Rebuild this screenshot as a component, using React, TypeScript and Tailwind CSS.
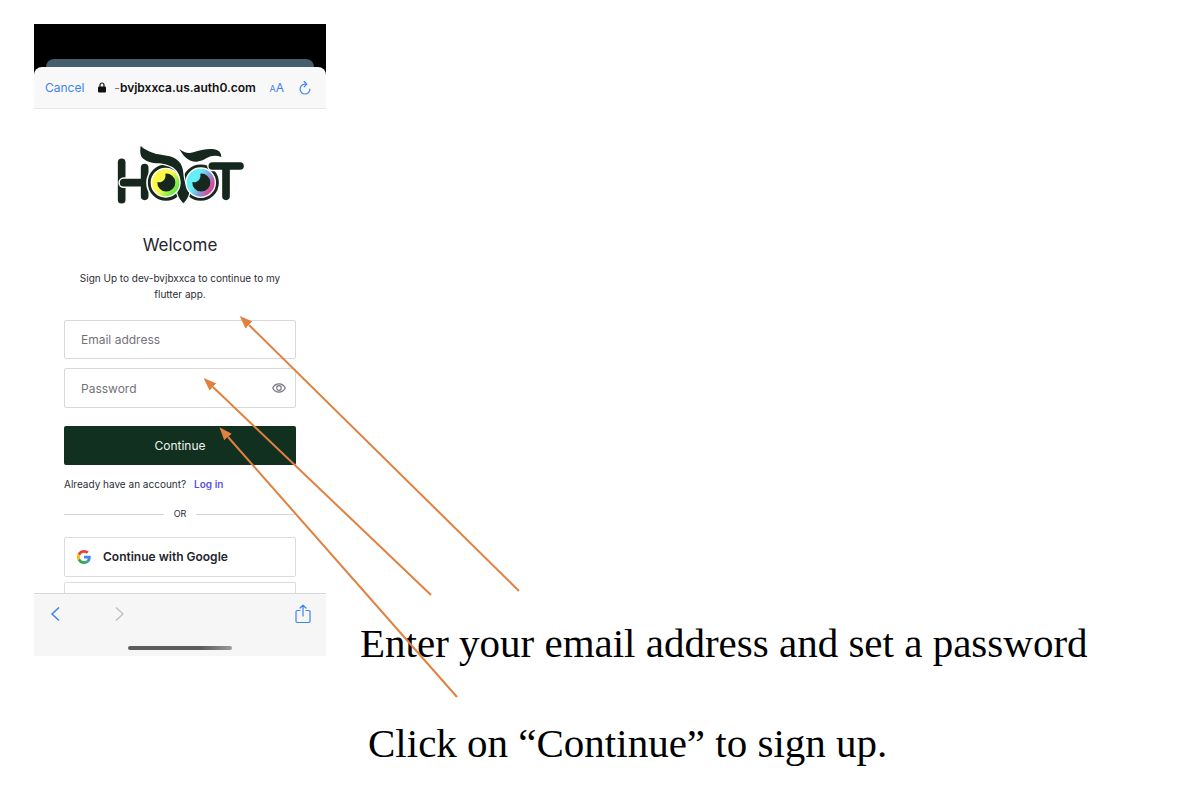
import { useId } from "react";

function HootLogo() {
  const id = useId();
  const dark = "#16271d";
  return (
    <svg viewBox="0 0 420 225" className="h-[75px] w-[140px]" role="img" aria-label="Hoot">
      <defs>
        <linearGradient id={`${id}y`} x1="0" y1="0.2" x2="1" y2="0.9">
          <stop offset="0.45" stopColor="#fdf94a" />
          <stop offset="0.85" stopColor="#5fe845" />
        </linearGradient>
        <linearGradient id={`${id}b`} x1="0" y1="0.2" x2="1" y2="0.75">
          <stop offset="0.35" stopColor="#66eef7" />
          <stop offset="0.6" stopColor="#7fa4e0" />
          <stop offset="0.85" stopColor="#d9489c" />
        </linearGradient>
      </defs>
      <g stroke={dark} strokeWidth="23" strokeLinecap="round">
        <path d="M35 73V185" />
        <path d="M41 134H104" stroke="#fff" strokeWidth="32" />
        <path d="M104 89V175M41 134H104" />
      </g>
      <circle cx="168" cy="134" r="57" fill={dark} stroke="#fff" strokeWidth="5" />
      <circle cx="272" cy="134" r="57" fill={dark} stroke="#fff" strokeWidth="5" />
      <g strokeLinecap="round">
        <path d="M307 84H390M348 84V175" stroke="#fff" strokeWidth="31" />
        <path d="M307 84H390M348 84V175" stroke={dark} strokeWidth="23" />
      </g>
      <path
        d="M92 23C89 44 91 56 102 64C120 78 142 75 162 78C186 83 202 94 208 113C213 131 202 151 202 166C205 178 213 189 220 196C228 188 235 178 238 164C228 146 222 130 220 106C219 76 202 58 171 53C146 49 130 47 114 38C104 32 98 30 92 23Z"
        fill={dark}
        stroke="#fff"
        strokeWidth="7"
        paintOrder="stroke"
      />
      <path
        d="M208 33C222 44 234 47 250 43C268 37 288 32 306 33C325 34 334 43 334 57C324 53 312 52 302 55C288 60 278 70 260 71C236 72 220 55 208 33Z"
        fill={dark}
      />
      <circle cx="167" cy="134" r="43" fill={`url(#${id}y)`} stroke="#fff" strokeWidth="4" />
      <circle cx="272" cy="134" r="44" fill={`url(#${id}b)`} stroke="#fff" strokeWidth="4" />
      <path d="M166 107A27 27 0 1 1 142 132C158 136 169 122 166 107Z" fill={dark} />
      <path d="M271 107A27 27 0 1 1 247 132C263 136 274 122 271 107Z" fill={dark} />
    </svg>
  );
}

function GoogleMark() {
  return (
    <svg viewBox="0 0 48 48" className="size-[14px]" aria-hidden="true">
      <path fill="#ea4335" d="M24 9.500c3.500 0 6.700 1.200 9.200 3.600l6.900-6.900C35.900 2.400 30.500 0 24 0 14.600 0 6.500 5.400 2.600 13.200l8 6.200C12.400 13.700 17.700 9.500 24 9.500z" />
      <path fill="#4285f4" d="M47 24.500c0-1.600-.2-3.100-.4-4.500H24v9h12.900c-.6 3-2.200 5.500-4.700 7.200l7.700 6C44.400 38 47 31.800 47 24.500z" />
      <path fill="#fbbc05" d="M10.500 28.600A14.500 14.500 0 0 1 10.500 19.400l-7.900-6.200A24 24 0 0 0 2.600 34.800z" />
      <path fill="#34a853" d="M24 48c6.500 0 11.900-2.100 15.900-5.800l-7.700-6c-2.100 1.500-4.900 2.300-8.200 2.300-6.300 0-11.600-4.200-13.500-9.900l-7.900 6.200C6.500 42.600 14.600 48 24 48z" />
    </svg>
  );
}

function BrowserBar() {
  return (
    <header className="bg-black pt-[35px]">
      <div className="mx-3 h-2 rounded-t-lg bg-[#465d6e]" />
      <div className="flex h-[42px] items-center rounded-t-lg border-b border-[#e6e6e6] bg-[#f8f8f8] pr-[14px] pl-[11px] text-[#3c82f0]">
        <button type="button" className="text-[12px]">Cancel</button>
        <svg viewBox="0 0 8 11" className="ml-[14px] h-[11px] w-2" aria-hidden="true">
          <rect y="4.500" width="8" height="6" rx="1" fill="#111" />
          <path d="M2 5V3a2 2 0 0 1 4 0v2" fill="none" stroke="#111" strokeWidth="1.200" />
        </svg>
        <span className="ml-2 text-[12px] font-semibold whitespace-nowrap text-[#111]">
          <span className="font-normal text-[#777]">-</span>bvjbxxca.us.auth0.com
        </span>
        <button type="button" aria-label="Text size" className="ml-auto flex items-baseline">
          <span className="text-[9px]">A</span>
          <span className="text-[12px]">A</span>
        </button>
        <button type="button" aria-label="Reload" className="ml-[14px]">
          <svg viewBox="0 0 14 16" className="h-4 w-[14px]" fill="none" stroke="currentColor" strokeWidth="1.200" strokeLinecap="round" strokeLinejoin="round">
            <path d="M7 4.200A4.900 4.900 0 1 0 11.900 9.100M6.200 1.500L8.800 4.200L6.200 6.800" />
          </svg>
        </button>
      </div>
    </header>
  );
}

function SignUpForm() {
  const field =
    "block w-full rounded-xs border border-[#d9d9dc] bg-white px-4 text-[12px] text-[#333] placeholder:text-[#727279] placeholder:opacity-100";
  return (
    <form className="px-[30px]" onSubmit={(e) => e.preventDefault()}>
      <input type="email" aria-label="Email address" placeholder="Email address" className={`${field} h-[39px]`} />
      <div className="relative mt-[9px]">
        <input type="password" aria-label="Password" placeholder="Password" className={`${field} h-10`} />
        <button type="button" aria-label="Show password" className="absolute inset-y-0 right-[10px] text-[#77777e]">
          <svg viewBox="0 0 14 10" className="h-[10px] w-[14px]" fill="none" stroke="currentColor" strokeWidth="1.200">
            <path d="M.7 5C3.500-.5 10.500-.5 13.300 5C10.500 10.500 3.500 10.500.7 5Z" />
            <circle cx="7" cy="5" r="2.300" />
          </svg>
        </button>
      </div>
      <button type="submit" className="mt-[18px] h-[39px] w-full rounded-xs bg-[#12301f] text-[12px] text-[#eef2ef]">
        Continue
      </button>
      <p className="mt-[11px] text-[10px] leading-4 text-[#2d2e38]">
        Already have an account?
        <a href="#login" className="ml-2 font-semibold text-[#5a50e6]">Log in</a>
      </p>
      <div className="mt-[14px] flex items-center gap-[10px] text-[9px] leading-4 text-[#2d2e38]">
        <span className="h-px flex-1 bg-[#d5d6d8]" />
        OR
        <span className="h-px flex-1 bg-[#d5d6d8]" />
      </div>
      <button type="button" className="mt-[15px] flex h-10 w-full items-center gap-3 rounded-xs border border-[#dcdcde] px-3 text-[12px] font-semibold text-[#24242e]">
        <GoogleMark />
        Continue with Google
      </button>
      <div className="mt-[5px] h-[11px] rounded-t-xs border border-b-0 border-[#dcdcde]" />
    </form>
  );
}

function BrowserTools() {
  return (
    <footer className="border-t border-[#d8d8d8] bg-[#f6f6f6] pb-[6px]">
      <div className="flex h-10 items-center px-[15px] text-[#3c82f0]">
        <button type="button" aria-label="Back">
          <svg viewBox="0 0 12 14" className="h-[14px] w-3" fill="none" stroke="currentColor" strokeWidth="1.500">
            <path d="M10 .5L3 7L10 13.500" />
          </svg>
        </button>
        <button type="button" aria-label="Forward" className="ml-[52px] text-[#bcbcbc]">
          <svg viewBox="0 0 12 14" className="h-[14px] w-3" fill="none" stroke="currentColor" strokeWidth="1.200">
            <path d="M3 .5L10 7L3 13.500" />
          </svg>
        </button>
        <button type="button" aria-label="Share" className="ml-auto">
          <svg viewBox="0 0 16 20" className="h-5 w-4" fill="none" stroke="currentColor" strokeWidth="1.200" strokeLinecap="round" strokeLinejoin="round">
            <path d="M5 6.500H2.200Q1 6.500 1 7.700V17.300Q1 18.500 2.200 18.500H13.800Q15 18.500 15 17.300V7.700Q15 6.500 13.800 6.500H11M8 12V1.200M5 4L8 1.200L11 4" />
          </svg>
        </button>
      </div>
      <div className="mx-auto mt-3 h-1 w-[104px] rounded-full bg-linear-to-r from-[#5c5c5c] from-70% to-[#9b9b9b]" />
    </footer>
  );
}

function Arrows() {
  return (
    <svg width="530" height="710" viewBox="0 0 530 710" className="pointer-events-none absolute top-0 left-0" aria-hidden="true">
      <defs>
        <marker id="head" markerUnits="userSpaceOnUse" markerWidth="14" markerHeight="12" refX="0" refY="5" orient="auto-start-reverse" viewBox="0 0 14 10">
          <path d="M0 0L13 5L0 10Z" fill="#e0813f" />
        </marker>
      </defs>
      <g stroke="#e0813f" strokeWidth="2">
        <path d="M249 325L519 591" markerStart="url(#head)" />
        <path d="M213 387L431 595" markerStart="url(#head)" />
        <path d="M228 437L457 697" markerStart="url(#head)" />
      </g>
    </svg>
  );
}

export default function App() {
  return (
    <main className="relative flex min-h-screen items-start gap-[34px] bg-white pt-6 pl-[34px]">
      <section className="w-[292px] shrink-0 bg-white font-['Inter',sans-serif]">
        <BrowserBar />
        <div className="flex justify-center pt-[29px]">
          <HootLogo />
        </div>
        <h1 className="mt-5 text-center text-[17px] leading-6 text-[#24252f]">Welcome</h1>
        <p className="mx-auto mt-[13px] mb-[18px] w-[220px] text-center text-[10px] leading-4 text-[#2d2e38]">
          Sign Up to dev-bvjbxxca to continue to my flutter app.
        </p>
        <SignUpForm />
        <BrowserTools />
      </section>
      <section className="flex flex-1 flex-col gap-[50px] pt-[594px] font-['Liberation_Serif',serif] text-[41px] leading-[50px] text-black">
        <p>Enter your email address and set a password</p>
        <p className="pl-2">Click on “Continue” to sign up.</p>
      </section>
      <Arrows />
    </main>
  );
}
